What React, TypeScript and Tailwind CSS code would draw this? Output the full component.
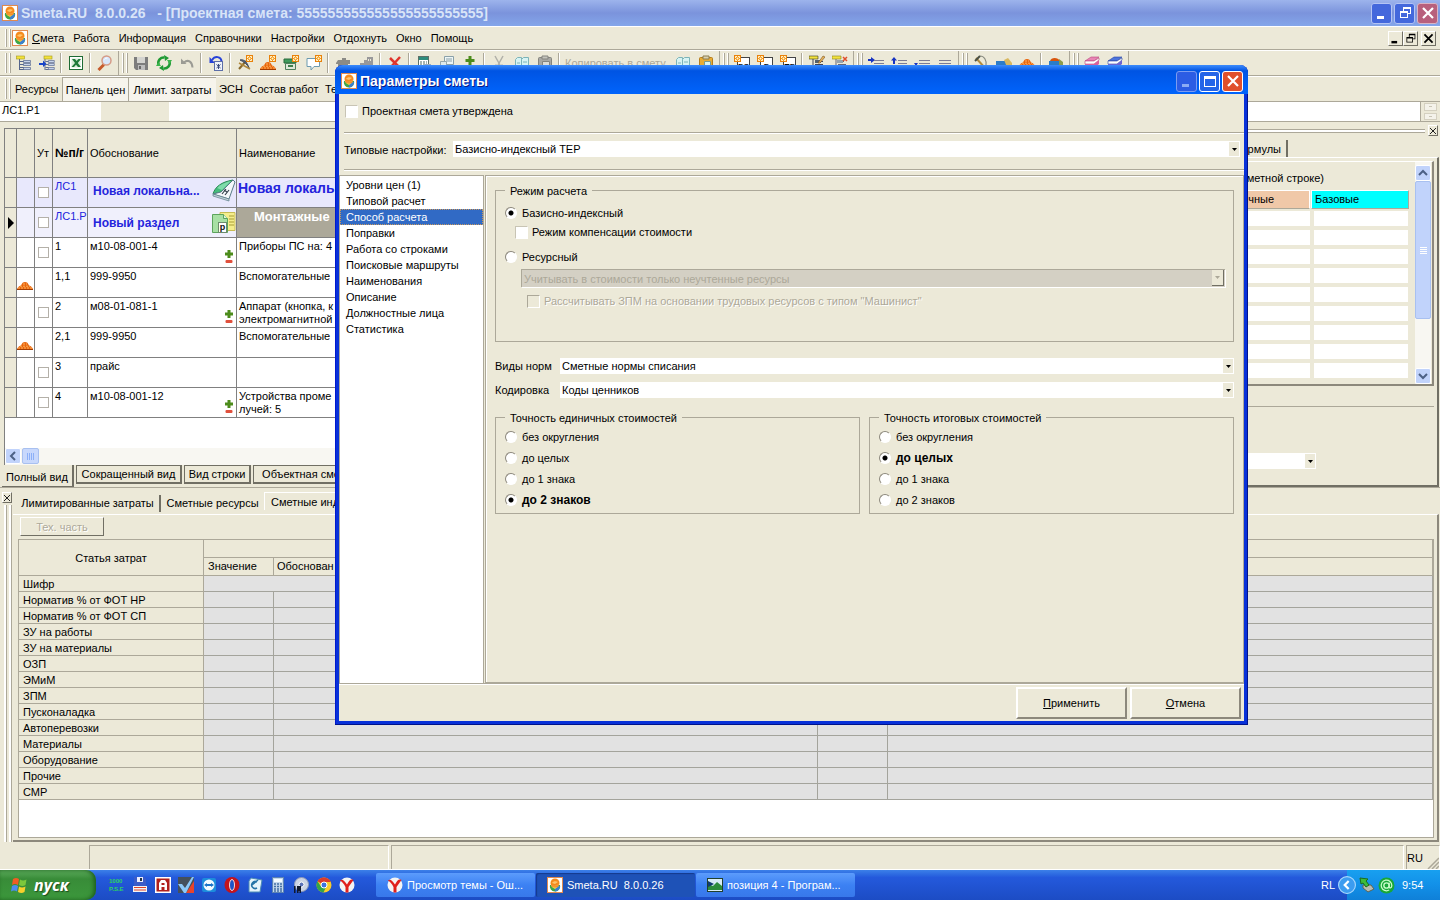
import clsx from "clsx";
import type { ReactNode } from "react";

const menuItems = ["Работа", "Информация", "Справочники", "Настройки", "Отдохнуть", "Окно", "Помощь"];

const sections = [
  "Уровни цен (1)",
  "Типовой расчет",
  "Способ расчета",
  "Поправки",
  "Работа со строками",
  "Поисковые маршруты",
  "Наименования",
  "Описание",
  "Должностные лица",
  "Статистика"
];

const precision = ["без округления", "до целых", "до 1 знака", "до 2 знаков"];

const estimateRows = [
  { num: "1", code: "м10-08-001-4", name: ["Приборы ПС на: 4"], check: true, pm: true },
  { num: "1,1", code: "999-9950", name: ["Вспомогательные"], mound: true },
  { num: "2", code: "м08-01-081-1", name: ["Аппарат (кнопка, к", "электромагнитной"], check: true, pm: true },
  { num: "2,1", code: "999-9950", name: ["Вспомогательные"], mound: true },
  { num: "3", code: "прайс", name: [], check: true },
  { num: "4", code: "м10-08-001-12", name: ["Устройства проме", "лучей: 5"], check: true, pm: true }
];

const costItems = [
  "Шифр",
  "Норматив % от ФОТ НР",
  "Норматив % от ФОТ СП",
  "ЗУ на работы",
  "ЗУ на материалы",
  "ОЗП",
  "ЭМиМ",
  "ЗПМ",
  "Пусконаладка",
  "Автоперевозки",
  "Материалы",
  "Оборудование",
  "Прочие",
  "СМР"
];

/* ---------- icons ---------- */

function Icon({ children, size = 16, label }: { children: ReactNode; size?: number; label?: string }) {
  return (
    <svg aria-hidden={!label} aria-label={label} className="shrink-0" height={size} viewBox="0 0 16 16" width={size}>
      {children}
    </svg>
  );
}

function Logo() {
  return (
    <Icon>
      <rect fill="#fff" height="15" stroke="#e08a50" width="15" x=".5" y=".5" />
      <path d="M3 8h10a5 5 0 0 1-5 6.500A5 5 0 0 1 3 8z" fill="#3fa648" />
      <path d="M8 9h5a5 5 0 0 1-5 5.500z" fill="#3b7fd0" />
      <path d="M4 9.500 12 9l-4 3z" fill="#f7d24a" />
      <circle cx="8" cy="6" fill="#f58a1c" r="4.500" />
      <path d="M5 6c1-2 4-2.500 6-1L8 7z" fill="#ffc46b" />
      <path d="M4 8.500c2 1 5 1 8-1" fill="none" stroke="#f5a04c" />
    </Icon>
  );
}

const treeBody = (
  <>
    <path d="M3.500 4v11" fill="none" stroke="#55658c" />
    <path d="M4 6.500h4M4 9.500h4M4 12.500h4M4 14.500h4" stroke="#55658c" />
    <path d="M7.500 5.500h7v2h-7zM7.500 8.500h7v2h-7zM7.500 12.500h7v2h-7z" fill="#c7d4ec" stroke="#55658c" strokeWidth=".7" />
  </>
);

const star = (
  <>
    <rect fill="#fff3d0" height="6" stroke="#e8820c" width="6" x="9.500" y=".5" />
    <path d="M12.500 1v5M10 3.500h5M10.800 1.800l3.400 3.400M14.200 1.800l-3.400 3.400" stroke="#f59a1c" />
    <circle cx="12.500" cy="3.500" fill="#fff3d0" r="1" />
  </>
);

const mound = (
  <>
    <path d="M0 14c1-2 2-3 4-3.500C5 8 6 7 8 7s3 1 4 3.500c2 .5 3 1.500 4 3.500z" fill="#e8650c" />
    <path d="M1 13h14M3 11.200h10M6 9h4" stroke="#ffb35e" strokeDasharray="2 1" />
    <path d="M0 14.500h16" stroke="#a23c00" />
  </>
);

const icons: Record<string, ReactNode> = {
  tree: (
    <>
      {treeBody}
      <rect fill="#f2e23c" height="3" stroke="#a59a1c" strokeWidth=".6" width="8" x=".5" y="1" />
    </>
  ),
  treeArrow: (
    <>
      <g transform="translate(3 0) scale(.85 1)">{treeBody}</g>
      <rect fill="#f2e23c" height="3" stroke="#a59a1c" strokeWidth=".6" width="8" x="5" y="1" />
      <path d="M0 8h4V5.500L7.500 9 4 12V10H0z" fill="#1744c8" />
    </>
  ),
  excel: (
    <>
      <rect fill="#fff" height="13" stroke="#1e6b34" width="13" x="1.500" y="1.500" />
      <rect fill="#d8ecd8" height="9" width="9" x="3.500" y="3.500" />
      <path d="M4 4h3l1.500 2L10.500 4H13L9.800 8 13 12h-3L8 9.700 6 12H3.500L7 8z" fill="#1f7a3a" />
    </>
  ),
  search: (
    <>
      <path d="M7 9.500 1.500 15" stroke="#c65b2c" strokeWidth="3" />
      <circle cx="9.500" cy="5.500" fill="#d7e6fb" r="4.500" stroke="#d59a86" strokeWidth="1.500" />
      <path d="M7.500 4.500a3 3 0 0 1 3-1.500" fill="none" stroke="#fff" />
    </>
  ),
  save: (
    <>
      <path d="M1 2h14v13H3l-2-2z" fill="#7d7d7d" />
      <path d="M4 2h8v6H4z" fill="#d4d4d0" />
      <path d="M5 10h7v5H5z" fill="#bdbdbd" />
      <path d="M6 11h2v3H6z" fill="#6a6a6a" />
    </>
  ),
  refresh: (
    <>
      <path d="M2.500 9.500a5.500 5.500 0 0 1 6-7" fill="none" stroke="#1f9a34" strokeWidth="2.500" />
      <path d="M13.500 6.500a5.500 5.500 0 0 1-6 7" fill="none" stroke="#1f9a34" strokeWidth="2.500" />
      <path d="M8 0l5 3-4 3zM8 16l-5-3 4-3z" fill="#1f9a34" />
      <path d="M11 5h5l-2.500 4zM5 11H0l2.500-4z" fill="#39b54a" />
    </>
  ),
  undo: (
    <>
      <path d="M5 7.500c4-3.500 8-1 8.500 5" fill="none" stroke="#9b9b94" strokeWidth="2" />
      <path d="M2 9V3.500L7.500 9z" fill="#9b9b94" />
    </>
  ),
  undoBox: (
    <>
      <path d="M4 5c3-4.500 9-3.500 9.500 1" fill="none" stroke="#2742d8" strokeWidth="2" />
      <path d="M1.500 2v6H7z" fill="#2742d8" />
      <rect fill="#eef2fb" height="9" stroke="#5c6ea8" width="8" x="6.500" y="6.500" />
      <path d="M8.500 9.500l4 3.500M12.500 9.500l-4 3.500M10.500 9v5" stroke="#38487c" />
    </>
  ),
  pickStar: (
    <>
      <path d="M2 14 9 6" stroke="#8a6a2c" strokeWidth="2" />
      <path d="M3 5c3-1 7 1 9 8-2-4-5-6-9-8z" fill="#5a6478" stroke="#444c5c" />
      <path d="M2 8l11 6" stroke="#b0883c" strokeWidth="1.500" />
      {star}
    </>
  ),
  moundStar: (
    <>
      {mound}
      {star}
    </>
  ),
  crateStar: (
    <>
      <path d="M1 4h12v4H1z" fill="#3f9a5c" stroke="#2a6b3c" />
      <path d="M2.500 8.500h10v6h-10z" fill="#dfe8da" stroke="#4f7f5c" />
      <path d="M5 11h5" stroke="#3f7f4c" strokeWidth="2" />
      {star}
    </>
  ),
  bubbleStar: (
    <>
      <path d="M1 3.500h12.500v8H8L5 15v-3.500H1z" fill="#fff" stroke="#6d9ab0" />
      {star}
    </>
  ),
  machine: <path d="M1 8l2-3h4V3h4v2h4v4h-2v5H3V9H1z" fill="#8b8b86" />,
  building: <path d="M2 8h4V5h3V2h6v12H2z M10 4h1v2h-1z M12 4h1v2h-1z" fill="#98989a" fillRule="evenodd" />,
  cross: <path d="M3 3l10 10M13 2 3 13" stroke="#e0342c" strokeWidth="2.500" />,
  calc: (
    <>
      <rect fill="#fff" height="14" stroke="#5c7068" width="10" x="2.500" y="1.500" />
      <path d="M3 2h9v3H3z" fill="#2e8c7c" />
      <path d="M4 7h7M4 9h7M4 11h7" stroke="#4a6a64" strokeDasharray="2 1" />
      <path d="M9 9h6v6H9z" fill="#9ab" />
    </>
  ),
  pages: (
    <>
      <path d="M5.500 1.500h9v8h-9z" fill="#eef6f6" stroke="#8aa0a8" />
      <path d="M7 4h6M7 6h6" stroke="#8aa0a8" />
      <path d="M1.500 6.500h6v8h-6z" fill="#dfeaea" stroke="#98a8ac" />
    </>
  ),
  plus: <path d="M6.500 1h3v3h3v3h-3v3h-3V7h-3V4h3z" fill="#4c8c1c" />,
  cut: (
    <>
      <path d="M4 1l5 9M12 1 7 10" stroke="#b0b0a8" strokeWidth="1.500" />
      <circle cx="5" cy="12" fill="none" r="2" stroke="#a0a09a" />
      <circle cx="11" cy="12" fill="none" r="2" stroke="#a0a09a" />
    </>
  ),
  copy: (
    <>
      <path d="M1.500 4.500l2-2h4v10h-6z" fill="#d7f3f3" stroke="#7cb4b8" />
      <path d="M7.500 4.500l2-2h5v11h-7z" fill="#d7f3f3" stroke="#7cb4b8" />
      <path d="M9 7h4M3 8h3" stroke="#7cb4b8" />
    </>
  ),
  paste: (
    <>
      <rect fill="#a8a8a4" height="12" rx="1" stroke="#84847e" width="13" x="1.500" y="2.500" />
      <path d="M5 1h6v3H5z" fill="#c4c4bc" stroke="#84847e" />
      <path d="M5.500 6.500h7v7h-7z" fill="#dcdcd8" stroke="#84847e" />
    </>
  ),
  pasteGold: (
    <>
      <rect fill="#e8ac34" height="12" rx="1" stroke="#b47c1c" width="13" x="1.500" y="2.500" />
      <path d="M5 1h6v3H5z" fill="#d8d0b0" stroke="#8c7c4c" />
      <path d="M6.500 6.500h6v7h-6z" fill="#d7f3f3" stroke="#7c9c8c" />
    </>
  ),
  treeEdit: (
    <>
      <path d="M4 4v9M6 6.500h8M6 9.500h8" stroke="#445" />
      <path d="M6 5h6v3H6z" fill="#55606c" />
      <path d="M0 1h9v3H0z" fill="#f2e23c" stroke="#3c3c1c" strokeWidth=".6" />
      <path d="M9 8l5-7 2 1-5 6z" fill="#e8b45c" stroke="#7c5420" strokeWidth=".6" />
    </>
  ),
  treeDelete: (
    <>
      <path d="M4 4v9M6 6.500h6M6 9.500h8" stroke="#667" />
      <path d="M5 5h6v3H5z" fill="#98a4ac" />
      <path d="M0 1h9v3H0z" fill="#f2e23c" stroke="#8c8420" strokeWidth=".6" />
      <path d="M11 2l4 4M15 2l-4 4" stroke="#e0502c" strokeWidth="1.500" />
    </>
  ),
  lineIn: (
    <>
      <path d="M0 4h3V2l4 3-4 3V6H0z" fill="#1733c0" />
      <path d="M6 5.500h10M6 8.500h10" stroke="#7c7c94" />
    </>
  ),
  lineUp: (
    <>
      <path d="M3 2 0 5.500h2V9h2V5.500h2z" fill="#1733c0" />
      <path d="M7 5.500h9M7 8.500h9" stroke="#7c7c94" />
    </>
  ),
  lineDown: (
    <>
      <path d="M5 5.500h11M5 8.500h11" stroke="#7c7c94" />
      <path d="M0 8h4l-2 3z" fill="#1733c0" />
    </>
  ),
  lines: <path d="M2 5.500h12M2 8.500h12" stroke="#7c7c94" />,
  pick: (
    <>
      <path d="M7 1c4 0 7 4 6 10" fill="none" stroke="#8a8c80" strokeWidth="1.200" />
      <path d="M3 3l9 10" stroke="#b08c40" strokeWidth="2" />
      <path d="M2 6l5-5" stroke="#4a5044" strokeWidth="2" />
    </>
  ),
  cart: (
    <>
      <path d="M0 6h12v7H0z" fill="#2c7cc8" />
      <path d="M8 5l4-2 4 5v4h-5z" fill="#d8b860" />
    </>
  ),
  moundLow: <g transform="translate(0 -3)">{mound}</g>,
  cartMound: (
    <>
      <path d="M1 6h12v7H1z" fill="#2c7cc8" />
      <path d="M2 6c1-4 8-4 10 0z" fill="#d8550c" />
      <path d="M11 4l4 3v3h-4z" fill="#8c9c4c" />
    </>
  ),
  bookPink: (
    <>
      <path d="M1 6l6-4h8l-5 4z" fill="#e884b4" stroke="#b8447c" strokeWidth=".6" />
      <path d="M1 6v3h9l5-4V3l-5 3z" fill="#fff" stroke="#b8447c" strokeWidth=".6" />
      <path d="M1 9h9l5-4v4l-5 4H1z" fill="#d8609c" />
    </>
  ),
  bookBlue: (
    <>
      <path d="M1 6l6-4h8l-5 4z" fill="#4c74dc" stroke="#2844a4" strokeWidth=".6" />
      <path d="M1 6v3h9l5-4V3l-5 3z" fill="#fff" stroke="#2844a4" strokeWidth=".6" />
      <path d="M1 9h9l5-4v4l-5 4H1z" fill="#6c64d0" />
    </>
  )
};

function DocStar({ text }: { text: string }) {
  return (
    <Icon>
      <rect fill="#fff" height="13" stroke="#444" width="12" x="3.500" y="2.500" />
      <rect fill="#fff3d0" height="6" stroke="#e8820c" width="6" x=".5" y=".5" />
      <path d="M3.500 1v5M1 3.500h5M1.800 1.800l3.400 3.400M5.200 1.800 1.800 5.200" stroke="#f59a1c" />
      <circle cx="3.500" cy="3.500" fill="#fff3d0" r="1" />
      <text fill="#111" fontFamily="Liberation Sans" fontSize="8" fontWeight="bold" textAnchor="middle" x="9.500" y="13.500">
        {text}
      </text>
    </Icon>
  );
}

function PlusMinus() {
  return (
    <svg aria-hidden className="shrink-0" height="14" viewBox="0 0 8 14" width="8">
      <path d="M2.500 0h3v2.500H8v3H5.500V8h-3V5.500H0v-3h2.500z" fill="#4c8c1c" />
      <rect fill="#e0503c" height="3" rx="1" width="7" x=".5" y="10" />
    </svg>
  );
}

function BookIcon() {
  return (
    <svg aria-hidden className="shrink-0" height="24" viewBox="0 0 24 24" width="24">
      <path d="M1 15C3 8 9 3 21 1L9 13z" fill="#45bd7c" stroke="#2a8a54" />
      <path d="M5 9C9 5 14 3 19 2l-9 9z" fill="#7fdcaa" />
      <path d="M1 15l8-2L21 1l2 2-6 17z" fill="#f4f8fa" stroke="#5a7c88" />
      <path d="M1 15l16 5v2L1 17z" fill="#c4d4da" stroke="#5a7c88" strokeWidth=".7" />
      <path d="M10 15l4-5M13 16l4-5M15 13l-3-2" stroke="#34424c" strokeWidth="1.200" />
    </svg>
  );
}

function SectionIcon() {
  return (
    <svg aria-hidden className="shrink-0" height="24" viewBox="0 0 24 24" width="24">
      <path d="M8 1.500h15v18H8z" fill="#f5ee8c" stroke="#c8bc54" />
      <path d="M17 5h5M17 8h5M17 11h5M17 14h5" stroke="#a89c34" />
      <path d="M.5 3.500h11l4 4v14H.5z" fill="#a8e0a4" stroke="#5ca45c" />
      <path d="M11.500 3.500v4h4" fill="#dff5dc" stroke="#5ca45c" />
      <rect fill="#fff" height="10" stroke="#6c8c6c" width="8" x="6.500" y="11.500" />
      <text fill="#111" fontFamily="Liberation Sans" fontSize="9" fontWeight="bold" textAnchor="middle" x="10.500" y="19">
        р
      </text>
    </svg>
  );
}

/* ---------- small controls ---------- */

function Tool({ name }: { name: string }) {
  return (
    <button aria-label={name} className="flex w-[23px] shrink-0 items-center justify-center" type="button">
      <Icon>{icons[name]}</Icon>
    </button>
  );
}

function Sep() {
  return (
    <span className="flex w-[6px] shrink-0 justify-center py-[2px]">
      <span className="w-[2px] border-l border-[#aca899] bg-white" />
    </span>
  );
}

function Grip() {
  return (
    <span className="flex w-[10px] shrink-0 gap-[2px] py-[2px] pl-[3px]">
      <span className="w-[2px] border-l border-white bg-[#aca899]" />
      <span className="w-[2px] border-l border-white bg-[#aca899]" />
    </span>
  );
}

function ToolGroup({ children }: { children: ReactNode }) {
  return <div className="flex shrink-0 border-r border-[#aca899] pr-[2px]">{children}</div>;
}

function Arrow({ className }: { className?: string }) {
  return (
    <svg aria-hidden className={className} height="3" viewBox="0 0 5 3" width="5">
      <path d="M0 0h5L2.500 3z" fill="currentColor" />
    </svg>
  );
}

function Combo({ label, value, className, disabled }: { label: string; value: string; className?: string; disabled?: boolean }) {
  return (
    <span className={clsx("relative flex", className)}>
      <select
        aria-label={label}
        className={clsx(
          "w-full appearance-none pl-[2px] leading-[14px] outline-none",
          disabled
            ? "h-[18px] border-t border-l border-[#aca899] bg-[#d4d0c4] text-[#aca899] shadow-[1px_1px_0_#fff]"
            : "h-[16px] bg-white text-black"
        )}
        disabled={disabled}
      >
        <option>{value}</option>
      </select>
      <span
        className={clsx(
          "pointer-events-none absolute top-[1px] right-[1px] bottom-[1px] flex items-center justify-center bg-[#ece9d8]",
          disabled ? "w-[12px] border-r border-b border-[#716f64] text-[#aca899]" : "w-[10px] text-black"
        )}
      >
        <Arrow />
      </span>
    </span>
  );
}

function Check({ label, disabled }: { label: string; disabled?: boolean }) {
  return (
    <label className={clsx("flex h-[14px] items-center gap-[4px]", disabled && "text-[#aca899] [text-shadow:1px_1px_0_#fff]")}>
      <input
        className={clsx(
          "h-[13px] w-[13px] appearance-none border border-r-white border-b-white",
          disabled ? "border-[#aca899] bg-[#ece9d8]" : "border-[#c8c4b4] bg-white"
        )}
        disabled={disabled}
        type="checkbox"
      />
      {label}
    </label>
  );
}

function Radio({ name, label, checked }: { name: string; label: string; checked?: boolean }) {
  return (
    <label className="flex h-[14px] items-center gap-[5px]">
      <input
        className="h-[12px] w-[12px] appearance-none rounded-full border border-[#8c887c] border-r-white border-b-white bg-white checked:bg-[radial-gradient(circle,#000_0_2px,#fff_3px)]"
        defaultChecked={checked}
        name={name}
        type="radio"
      />
      {label}
    </label>
  );
}

function GroupBox({ title, className, children }: { title: string; className?: string; children: ReactNode }) {
  return (
    <fieldset className={clsx("min-w-0 border border-[#aca899] pl-[9px]", className)}>
      <legend className="px-[5px] pt-[2px] leading-[13px]">{title}</legend>
      {children}
    </fieldset>
  );
}

function Precision({ title, name, selected }: { title: string; name: string; selected: number }) {
  return (
    <GroupBox className="flex-1 pt-[5px] pb-[6px]" title={title}>
      <div className="flex flex-col gap-[7px]">
        {precision.map((item, i) => (
          <div className={i === selected ? "text-[12px] font-bold" : ""} key={item}>
            <Radio checked={i === selected} label={item} name={name} />
          </div>
        ))}
      </div>
    </GroupBox>
  );
}

const captionGlyphs: Record<string, ReactNode> = {
  Свернуть: <path d="M3 11h7v3H3z" fill="currentColor" />,
  Развернуть: <path d="M2 3h12v11H2zM3 6v7h10V6z" fill="currentColor" fillRule="evenodd" />,
  Восстановить: (
    <path d="M6 2h8v7h-3v4H3V6h3zM7 4v2h4v2h2V4zM4 8v4h6V8z" fill="currentColor" fillRule="evenodd" />
  ),
  Закрыть: <path d="M3 3l10 10M13 3 3 13" stroke="currentColor" strokeWidth="2.200" />
};

function CaptionButton({ kind, className }: { kind: string; className: string }) {
  return (
    <button
      aria-label={kind}
      className={clsx("flex h-[21px] w-[21px] items-center justify-center rounded-[3px] border", className)}
      type="button"
    >
      <Icon>{captionGlyphs[kind]}</Icon>
    </button>
  );
}

function MdiButton({ kind, className }: { kind: string; className?: string }) {
  return (
    <button
      aria-label={kind}
      className={clsx(
        "flex h-[15px] w-[15px] items-center justify-center border border-white border-r-[#716f64] border-b-[#716f64] text-black",
        className
      )}
      type="button"
    >
      <Icon size={13}>{captionGlyphs[kind]}</Icon>
    </button>
  );
}

function DockClose() {
  return (
    <button
      aria-label="Закрыть панель"
      className="flex h-[11px] w-[10px] shrink-0 items-center justify-center border border-white border-r-[#716f64] border-b-[#716f64]"
      type="button"
    >
      <svg aria-hidden height="6" viewBox="0 0 6 6" width="6">
        <path d="M0 0l6 6M6 0 0 6" stroke="#222" />
      </svg>
    </button>
  );
}

function ScrollButton({ d, label }: { d: string; label: string }) {
  return (
    <button
      aria-label={label}
      className="flex h-[16px] w-[16px] shrink-0 items-center justify-center rounded-[2px] border border-white bg-[#c1d3fb]"
      type="button"
    >
      <svg aria-hidden height="10" viewBox="0 0 10 10" width="10">
        <path d={d} fill="none" stroke="#4d6185" strokeWidth="2" />
      </svg>
    </button>
  );
}

/* ---------- main window ---------- */

function TitleBar() {
  return (
    <header className="flex h-[27px] items-center gap-[3px] border-b border-white bg-linear-to-b from-[#9db4ec] via-[#7b93dc] to-[#84a6ea] pr-[2px] pl-[2px]">
      <Logo />
      <h1 className="flex-1 text-[14px] font-bold whitespace-pre text-[#d8e4f8]">
        Smeta.RU{"  "}8.0.0.26{"   "}- [Проектная смета: 555555555555555555555555]
      </h1>
      <div className="flex gap-[2px]">
        <CaptionButton className="border-[#b4c4f4] bg-[#4468dc] text-white" kind="Свернуть" />
        <CaptionButton className="border-[#b4c4f4] bg-[#4468dc] text-white" kind="Восстановить" />
        <CaptionButton className="border-[#d8b4c4] bg-[#b8607c] text-white" kind="Закрыть" />
      </div>
    </header>
  );
}

function MenuBar() {
  return (
    <nav className="flex h-[23px] items-center border-b border-[#aca899] pr-[4px] pl-[2px]">
      <span className="flex self-stretch">
        <Grip />
      </span>
      <Logo />
      <button className="ml-[4px]" type="button">
        <u>С</u>мета
      </button>
      {menuItems.map((item) => (
        <button className="ml-[9px]" key={item} type="button">
          {item}
        </button>
      ))}
      <div className="ml-auto flex">
        <MdiButton kind="Свернуть" />
        <MdiButton kind="Восстановить" />
        <MdiButton className="ml-[3px]" kind="Закрыть" />
      </div>
    </nav>
  );
}

function Toolbar() {
  return (
    <div className="flex h-[26px] overflow-hidden border-t border-b border-t-white border-b-[#aca899]">
      <div className="flex w-[119px] shrink-0 border-r border-[#aca899] pl-[2px]">
        <Grip />
        <Tool name="tree" />
        <Tool name="treeArrow" />
        <Sep />
        <Tool name="excel" />
        <Sep />
        <Tool name="search" />
      </div>
      <ToolGroup>
        <Grip />
        <Tool name="save" />
        <Tool name="refresh" />
        <Tool name="undo" />
        <Sep />
        <Tool name="undoBox" />
        <Sep />
        <Tool name="pickStar" />
        <Tool name="moundStar" />
        <Tool name="crateStar" />
        <Tool name="bubbleStar" />
        <Sep />
        <Tool name="machine" />
        <Tool name="building" />
        <Sep />
        <Tool name="cross" />
        <Sep />
        <Tool name="calc" />
        <Tool name="pages" />
        <Tool name="plus" />
        <Sep />
        <Tool name="cut" />
        <Tool name="copy" />
        <Tool name="paste" />
        <Sep />
        <button className="w-[109px] pl-[3px] text-left whitespace-nowrap text-[#aca899]" disabled type="button">
          Копировать в смету
        </button>
        <Tool name="copy" />
        <Tool name="pasteGold" />
      </ToolGroup>
      <ToolGroup>
        <Grip />
        {["РС", "Р", "ПР"].map((text) => (
          <button className="flex w-[23px] items-center justify-center" key={text} type="button">
            <DocStar text={text} />
          </button>
        ))}
        <Sep />
        <Tool name="treeEdit" />
        <Tool name="treeDelete" />
      </ToolGroup>
      <ToolGroup>
        <Grip />
        <Tool name="lineIn" />
        <Tool name="lineUp" />
        <Tool name="lineDown" />
        <Tool name="lines" />
      </ToolGroup>
      <ToolGroup>
        <Grip />
        <Tool name="pick" />
        <Tool name="cart" />
        <Tool name="moundLow" />
        <Sep />
        <Tool name="cartMound" />
      </ToolGroup>
      <ToolGroup>
        <Grip />
        <Tool name="bookPink" />
        <Tool name="bookBlue" />
      </ToolGroup>
    </div>
  );
}

function PanelBar() {
  const pressed = "border-t border-l border-[#aca899] bg-[#f6f4ec]";

  return (
    <div className="flex h-[26px] border-t border-b border-t-white border-b-[#aca899] pl-[2px] whitespace-nowrap">
      <Grip />
      <button className="w-[50px] pl-[3px] text-left" type="button">
        Ресурсы
      </button>
      <button className={clsx("w-[66px] shrink-0", pressed)} type="button">
        Панель цен
      </button>
      <button className={clsx("w-[88px] shrink-0", pressed)} type="button">
        Лимит. затраты
      </button>
      <button className="w-[30px] shrink-0" type="button">
        ЭСН
      </button>
      <button className="w-[76px] shrink-0" type="button">
        Состав работ
      </button>
      <button className="ml-[3px]" type="button">
        Те
      </button>
    </div>
  );
}

function CellBar() {
  return (
    <div className="flex h-[20px] border-b border-[#aca899] bg-white">
      <span className="w-[101px] pl-[2px] leading-[16px]">ЛС1.Р1</span>
      <span className="w-[68px] bg-[#ece9d8]" />
      <input aria-label="Значение ячейки" className="min-w-0 flex-1 border-r border-[#aca899] outline-none" type="text" />
      <div className="flex w-[19px] flex-col items-end gap-[2px] bg-[#ece9d8] py-[1px] pr-[3px]">
        {["больше", "меньше"].map((label) => (
          <button
            aria-label={label}
            className="flex h-[8px] w-[13px] items-center justify-center border border-[#d4d0c0] bg-[#f4f2ea] text-[#aca899]"
            key={label}
            type="button"
          >
            <span className="h-px w-[3px] bg-[#c8c4b4]" />
          </button>
        ))}
      </div>
    </div>
  );
}

function RowCheck({ label }: { label: string }) {
  return (
    <input
      aria-label={label}
      className="mx-auto mt-[9px] block h-[11px] w-[11px] appearance-none border border-[#b4b0a8] bg-white"
      type="checkbox"
    />
  );
}

const cell = "border-r border-b border-[#808080] align-top";

function EstimateTable() {
  return (
    <table className="w-full table-fixed border-separate border-spacing-0 border-t border-[#808080] text-left">
      <colgroup>
        <col className="w-[12px]" />
        <col className="w-[18px]" />
        <col className="w-[18px]" />
        <col className="w-[35px]" />
        <col className="w-[149px]" />
        <col />
      </colgroup>
      <thead>
        <tr className="h-[49px] bg-[#ece9d8] whitespace-nowrap [&>th]:border-r [&>th]:border-b [&>th]:border-[#808080] [&>th]:pl-[2px] [&>th]:font-normal">
          <th />
          <th />
          <th>Ут</th>
          <th>
            <b className="text-[12px]">№п/г</b>
          </th>
          <th>Обоснование</th>
          <th>Наименование</th>
        </tr>
      </thead>
      <tbody>
        <tr className="h-[30px] bg-[#e8e8fc] text-[#2424dc]">
          <td className={clsx(cell, "bg-[#ece9d8]")} />
          <td className={cell} />
          <td className={cell}>
            <RowCheck label="ЛС1" />
          </td>
          <td className={clsx(cell, "pt-[1px] pl-[2px] leading-[14px]")}>ЛС1</td>
          <td className={cell}>
            <div className="flex h-[26px] items-center justify-between pl-[5px] text-[12px] font-bold">
              Новая локальна...
              <BookIcon />
            </div>
          </td>
          <td className={clsx(cell, "pt-[1px] pl-[1px] text-[14px] leading-[18px] font-bold whitespace-nowrap")}>Новая локаль</td>
        </tr>
        <tr className="h-[30px] bg-[#f0f0fc] text-[#2424dc]">
          <td className={clsx(cell, "bg-[#ece9d8]")}>
            <svg aria-hidden className="mt-[9px] ml-[3px]" height="12" viewBox="0 0 6 12" width="6">
              <path d="M0 0l6 6-6 6z" />
            </svg>
          </td>
          <td className={cell} />
          <td className={cell}>
            <RowCheck label="ЛС1.Р1" />
          </td>
          <td className={clsx(cell, "pt-[1px] pl-[2px] leading-[14px]")}>ЛС1.Р</td>
          <td className={cell}>
            <div className="flex h-[29px] items-center justify-between pl-[5px] text-[12px] font-bold">
              Новый раздел
              <SectionIcon />
            </div>
          </td>
          <td className={clsx(cell, "bg-[#aca899] pl-[17px] text-[13px] leading-[17px] font-bold text-white")}>Монтажные</td>
        </tr>
        {estimateRows.map((row) => (
          <tr className="h-[30px] bg-white leading-[13px]" key={row.num}>
            <td className={clsx(cell, "bg-[#ece9d8]")} />
            <td className={cell}>
              {row.mound && (
                <span className="flex pt-[7px]">
                  <Icon>{mound}</Icon>
                </span>
              )}
            </td>
            <td className={cell}>{row.check && <RowCheck label={row.num} />}</td>
            <td className={clsx(cell, "pt-[2px] pl-[2px]")}>{row.num}</td>
            <td className={cell}>
              <div className="flex justify-between pt-[2px] pr-[3px] pl-[2px]">
                {row.code}
                <span className="-mb-[2px] pt-[10px]">{row.pm && <PlusMinus />}</span>
              </div>
            </td>
            <td className={clsx(cell, "pt-[2px] pl-[2px] whitespace-nowrap")}>
              {row.name.map((line) => (
                <div key={line}>{line}</div>
              ))}
            </td>
          </tr>
        ))}
      </tbody>
    </table>
  );
}

function EstimatePane() {
  const tab = "h-[19px] border border-[#716f64] border-r-2 border-b-2 text-center leading-[16px] whitespace-nowrap";

  return (
    <section className="flex min-w-0 flex-1 flex-col pt-[3px]">
      <div className="ml-[4px] flex flex-1 flex-col border-l border-[#808080] bg-white">
        <EstimateTable />
        <div className="flex-1" />
        <div className="flex h-[17px] bg-[#f8f7f2]">
          <ScrollButton d="M7 1 3 5l4 4" label="Прокрутить влево" />
          <span className="ml-[1px] flex h-[16px] w-[17px] items-center justify-center gap-px rounded-[2px] border border-[#a8c0f0] bg-[#c8d8fc]">
            {[0, 1, 2, 3].map((i) => (
              <i className="h-[7px] w-px bg-[#8cb0f8]" key={i} />
            ))}
          </span>
        </div>
      </div>
      <div className="flex h-[22px] gap-[2px] pl-[2px]">
        <button className="w-[72px] border-r-2 border-b border-[#716f64] pt-[3px] text-center" type="button">
          Полный вид
        </button>
        <button className={clsx(tab, "w-[106px]")} type="button">
          Сокращенный вид
        </button>
        <button className={clsx(tab, "w-[67px]")} type="button">
          Вид строки
        </button>
        <button className={clsx(tab, "w-[97px] overflow-hidden")} type="button">
          Объектная сме
        </button>
      </div>
    </section>
  );
}

function PricePane() {
  return (
    <aside className="flex w-[400px] flex-col pr-[1px]">
      <div className="flex items-center gap-[3px] pr-[1px]">
        <span className="h-[4px] flex-1 border-y border-[#aca899] bg-white" />
        <DockClose />
      </div>
      <div className="flex h-[21px] items-end justify-end pr-[151px]">
        <button className="h-[17px] border-r-2 border-[#716f64] px-[5px]" type="button">
          Формулы
        </button>
      </div>
      <div className="flex-1 border-t border-r-2 border-b-2 border-white border-r-[#716f64] border-b-[#716f64] pt-[3px] pr-[3px]">
        <div className="flex h-[225px] overflow-hidden border-t border-r-2 border-b-2 border-white border-r-[#8c887c] border-b-[#8c887c] pr-[1px]">
          <div className="flex-1 pt-[8px] pr-[6px]">
            <p className="h-[20px] pr-[85px] text-right">(данные по сметной строке)</p>
            <div className="grid grid-cols-[1fr_98px] gap-x-[1px] leading-[17px]">
              <div className="border border-white border-b-[#aca899] bg-[#f0c8a8] pr-[35px] text-right">Единичные</div>
              <div className="border border-white border-r-[#aca899] border-b-[#aca899] bg-[#00ffff] pl-[3px]">Базовые</div>
            </div>
            <div className="grid grid-cols-[1fr_94px] gap-x-[4px] gap-y-[4px] pt-[2px] pr-[1px]">
              {Array.from({ length: 18 }, (_, i) => (
                <span className="h-[15px] bg-white" key={i} />
              ))}
            </div>
          </div>
          <div className="flex w-[16px] flex-col bg-[#f8f7f2] pt-[3px]">
            <ScrollButton d="M1 7l4-4 4 4" label="Прокрутить вверх" />
            <span className="flex h-[138px] flex-col items-center justify-center gap-px rounded-[2px] border border-[#a8c0f0] bg-[#c1d3fb]">
              {[0, 1, 2, 3].map((i) => (
                <i className="h-px w-[7px] bg-white" key={i} />
              ))}
            </span>
            <span className="flex-1" />
            <ScrollButton d="M1 3l4 4 4-4" label="Прокрутить вниз" />
          </div>
        </div>
        <hr className="mt-[20px] border-t border-[#aca899]" />
        <Combo className="mt-[46px] mr-[118px] ml-[40px]" label="Уровень цен" value="" />
      </div>
    </aside>
  );
}

function IndexPane() {
  return (
    <section className="flex border-t border-[#aca899] pt-[4px]">
      <div className="flex w-[13px] shrink-0 flex-col gap-[2px] pl-[2px]">
        <DockClose />
        <span className="ml-[2px] flex flex-1 gap-[2px]">
          <span className="w-[3px] border-r border-[#aca899] bg-white" />
          <span className="w-[3px] border-r border-[#aca899] bg-white" />
        </span>
      </div>
      <div className="min-w-0 flex-1 pr-[1px]">
        <div className="flex h-[22px] items-start pl-[3px] whitespace-nowrap">
          <button className="mt-[3px] h-[17px] w-[145px] border-r-2 border-[#716f64] text-center leading-[15px]" type="button">
            Лимитированные затраты
          </button>
          <button className="mt-[3px] h-[17px] w-[103px] text-center leading-[15px]" type="button">
            Сметные ресурсы
          </button>
          <button className="h-[18px] border-t border-l border-white pl-[6px]" type="button">
            Сметные инд
          </button>
        </div>
        <div className="border-t border-r-2 border-b-2 border-white border-r-[#8c887c] border-b-[#8c887c] pt-[2px] pr-[3px] pb-[2px] pl-[5px]">
          <button
            className="mb-[3px] ml-[2px] block h-[19px] w-[84px] border border-white border-r-[#716f64] border-b-[#716f64] text-[#aca899] [text-shadow:1px_1px_0_#fff]"
            disabled
            type="button"
          >
            Тех. часть
          </button>
          <div className="border border-[#aca899] bg-white">
            <table className="w-full table-fixed border-separate border-spacing-0 text-left [&_td]:border-r [&_td]:border-b [&_td]:border-[#a4a49c] [&_td]:bg-[#e2e2e2] [&_th]:border-r [&_th]:border-b [&_th]:border-[#aca899] [&_th]:bg-[#ece9d8] [&_th]:font-normal">
              <colgroup>
                <col className="w-[185px]" />
                <col className="w-[70px]" />
                <col />
                <col className="w-[70px]" />
                <col className="w-[545px]" />
              </colgroup>
              <thead>
                <tr className="h-[18px]">
                  <th className="text-center" rowSpan={2}>
                    Статья затрат
                  </th>
                  <th colSpan={4} />
                </tr>
                <tr className="h-[18px] leading-[13px]">
                  <th className="pl-[4px]">Значение</th>
                  <th className="pl-[3px]">Обоснован</th>
                  <th />
                  <th />
                </tr>
              </thead>
              <tbody>
                {costItems.map((item, i) => (
                  <tr className="h-[16px] leading-[14px]" key={item}>
                    <th className="pt-[1px] pl-[4px]">{item}</th>
                    {i === 0 ? (
                      <td colSpan={4} />
                    ) : (
                      <>
                        <td />
                        <td />
                        <td />
                        <td />
                      </>
                    )}
                  </tr>
                ))}
              </tbody>
            </table>
            <div className="h-[37px]" />
          </div>
        </div>
      </div>
    </section>
  );
}

function StatusBar() {
  const box = "border-t border-l border-[#aca899] border-r border-r-white";

  return (
    <div className="mt-[3px] flex h-[25px] gap-[2px] border-b border-white">
      <span className="w-[87px]" />
      <span className={clsx(box, "w-[300px]")} />
      <span className={clsx(box, "flex-1")} />
      <span className={clsx(box, "flex w-[34px] items-center")}>
        RU
        <svg aria-hidden className="ml-auto self-end" height="12" viewBox="0 0 12 12" width="12">
          <path d="M1 12 12 1M5 12l7-7M9 12l3-3" stroke="#aca899" strokeWidth="1.500" />
        </svg>
      </span>
    </div>
  );
}

/* ---------- taskbar ---------- */

const yandex = (
  <>
    <circle cx="8" cy="8" fill="#f4f4f4" r="7.500" />
    <path d="M.8 3.500C3 1.500 5 3 8 7.500c2-4 4-6 6.500-4.500L9.500 10v5.500h-3V10C5 7 3 4.500.8 3.500z" fill="#e0201c" />
  </>
);

const quickLaunch: [string, ReactNode][] = [
  [
    "1000 PSE",
    <g fill="#2cd45c" fontFamily="Liberation Sans" fontSize="6" fontWeight="bold" key="p">
      <text x="0" y="6">
        1000
      </text>
      <text x="0" y="14">
        P.S.E
      </text>
    </g>
  ],
  [
    "Дискета",
    <g key="d">
      <path d="M2 0h10l2 2v7H2z" fill="#3c5cc8" />
      <path d="M5 0h6v5H5z" fill="#eef" />
      <path d="M8 1h2v3H8z" fill="#234" />
      <path d="M1 9h14v6H1z" fill="#f4f4f4" />
      <path d="M2 10.500h12M2 13h12" stroke="#e0442c" />
    </g>
  ],
  [
    "AutoCAD",
    <g key="a">
      <rect fill="#fff" height="16" width="16" />
      <rect fill="#b0201c" height="13" width="13" x="1.500" y="1.500" />
      <path d="M4 13V6l2-3h4l2 3v7H9.500v-3h-3v3zM6.500 8h3V6h-3z" fill="#fff" fillRule="evenodd" />
    </g>
  ],
  [
    "Проверка",
    <g key="c">
      <path d="M0 0h16v16H0z" fill="#44505c" />
      <path d="M8 16h8V4z" fill="#e8442c" />
      <path d="M0 7h4l3 4 7-11h2L8 16H6z" fill="#8cc8f8" />
    </g>
  ],
  [
    "TeamViewer",
    <g key="t">
      <rect fill="#1c8cdc" height="14" rx="2" width="14" x="1" y="1" />
      <circle cx="8" cy="8" fill="#f4faff" r="5.500" />
      <path d="M3 8l3-2v1h4V6l3 2-3 2V9H6v1z" fill="#1c74c8" />
    </g>
  ],
  [
    "Opera",
    <g key="o">
      <ellipse cx="8" cy="8" fill="#c4141c" rx="7.500" ry="8" />
      <ellipse cx="8" cy="8" fill="#1c54c8" rx="2.500" ry="5.500" stroke="#fbd4d4" />
    </g>
  ],
  [
    "Документы",
    <g key="w">
      <path d="M4 1l11 2-2 12H2V4z" fill="#e4f4fc" stroke="#4c8cb4" />
      <path d="M10 5a3.500 3.500 0 1 0 0 6M5 8l6-5" fill="none" stroke="#2474a8" strokeWidth="1.500" />
    </g>
  ],
  [
    "Калькулятор",
    <g key="k">
      <rect fill="#c4d8ec" height="15" stroke="#5c84b4" width="11" x="2.500" y=".5" />
      <path d="M4 2h8v3H4z" fill="#f4fcff" />
      <path d="M4 7h8M4 9.500h8M4 12h8M4 14h8" stroke="#4470a4" strokeDasharray="2 1" strokeWidth="1.500" />
    </g>
  ],
  [
    "Диск",
    <g key="i">
      <circle cx="8.500" cy="7.500" fill="#ccd4e4" r="7" stroke="#8c98b4" />
      <circle cx="8.500" cy="7.500" fill="#5c74b8" r="2.500" stroke="#fff" />
      <path d="M1 9h1.500v7H1zM4 9h4v7H6.500v-2h-1v2H4z" fill="#10182c" />
    </g>
  ],
  [
    "Chrome",
    <g key="g">
      <circle cx="8" cy="8" fill="#f8cc2c" r="7.500" />
      <path d="M8 8 1.500 4.200A7.500 7.500 0 0 1 14.800 5H8z" fill="#dc3c2c" />
      <path d="M8 8 5 9.500 1.500 4.200A7.500 7.500 0 0 0 7.500 15.500L10 10z" fill="#34a448" />
      <circle cx="8" cy="8" fill="#3c74e0" r="3" stroke="#fff" />
    </g>
  ],
  ["Яндекс", <g key="y">{yandex}</g>]
];

function TaskButton({ icon, text, active }: { icon: ReactNode; text: string; active?: boolean }) {
  return (
    <button
      className={clsx(
        "flex h-[24px] w-[159px] items-center gap-[4px] rounded-[2px] pl-[11px] text-left whitespace-pre text-white",
        active ? "bg-[#1e52b7] shadow-[inset_1px_1px_1px_#143a8c]" : "bg-linear-to-b from-[#5c9cfc] via-[#3c81f3] to-[#3878ea]"
      )}
      type="button"
    >
      {icon}
      {text}
    </button>
  );
}

function Taskbar() {
  return (
    <footer className="flex h-[30px] bg-linear-to-b from-[#3c80e8] via-[#2459dc] via-25% to-[#1c4cc4] text-white">
      <button
        className="flex w-[96px] shrink-0 items-center gap-[5px] rounded-r-[10px] bg-linear-to-b from-[#5cac5c] via-[#388c38] via-30% to-[#3c983c] pl-[11px] shadow-[inset_-2px_0_4px_#1c5c1c]"
        type="button"
      >
        <svg aria-hidden height="18" viewBox="0 0 18 18" width="18">
          <path d="M2 3c2-1.500 4-1.500 6 0L7 9C5 7.500 3 7.500 1 9z" fill="#f05c24" />
          <path d="M9 3.500c2 1.200 4 1.200 6.500 0l-1 5.500c-2 1.200-4 1.200-6.500 0z" fill="#7cc83c" />
          <path d="M1 10c2-1.500 4-1.500 6 0l-1 5.500c-2-1.500-4-1.500-6 0z" fill="#4c8cf0" />
          <path d="M8 10.500c2 1.200 4 1.200 6.500 0l-1 5.500c-2 1.200-4 1.200-6.500 0z" fill="#f8d02c" />
        </svg>
        <span className="font-['Open_Sans'] text-[16px] leading-[20px] font-bold italic [text-shadow:1px_1px_1px_#1c4c1c]">пуск</span>
      </button>
      <div className="ml-[9px] flex w-[271px] shrink-0">
        {quickLaunch.map(([name, art]) => (
          <button aria-label={name} className="flex w-[23px] items-center justify-center" key={name} type="button">
            <Icon>{art}</Icon>
          </button>
        ))}
      </div>
      <div className="flex flex-1 items-center gap-[1px]">
        <TaskButton icon={<Icon>{yandex}</Icon>} text="Просмотр темы - Ош..." />
        <TaskButton active icon={<Logo />} text="Smeta.RU  8.0.0.26" />
        <TaskButton
          icon={
            <Icon>
              <rect fill="#d8ecf8" height="13" stroke="#20402c" width="15" x=".5" y="1.500" />
              <path d="M1 13V7l5 2 4-4 5 4v4z" fill="#2c8c3c" />
              <path d="M1 4l6 3-6 3z" fill="#103c70" />
            </Icon>
          }
          text="позиция 4 - Програм..."
        />
      </div>
      <span className="w-[26px] self-center">RL</span>
      <div className="flex w-[93px] items-center gap-[3px] bg-linear-to-b from-[#18a0f0] via-[#1290e8] to-[#0f80d8]">
        <button aria-label="Скрытые значки" className="-ml-[9px] rounded-full" type="button">
          <Icon size={18}>
            <circle cx="8" cy="8" fill="#3c9cf0" r="7.500" stroke="#a8d8fc" />
            <path d="M9.500 4.500 6 8l3.500 3.500" fill="none" stroke="#fff" strokeWidth="2" />
          </Icon>
        </button>
        <Icon>
          <path d="M4 8h8l3 4-6 3-5-4z" fill="#b8bcb0" stroke="#5c6454" />
          <path d="M1 1l8 1-2 2 3 4-3 2-3-4-2 1z" fill="#3cbc3c" stroke="#1c6c1c" />
        </Icon>
        <Icon size={17}>
          <circle cx="8" cy="8" fill="#18a838" r="7.500" />
          <circle cx="8" cy="8" fill="none" r="2.500" stroke="#c8fcc8" strokeWidth="1.300" />
          <path d="M10.500 5.500V9c0 2 2.500 1.500 2.500-1a5 5 0 1 0-2.500 4.300" fill="none" stroke="#c8fcc8" strokeWidth="1.200" />
        </Icon>
        <time className="ml-[4px]">9:54</time>
      </div>
    </footer>
  );
}

/* ---------- dialog ---------- */

function ParametersDialog() {
  const action = "h-[32px] w-[111px] border-2 border-white border-r-[#8c887c] border-b-[#8c887c]";
  const rule = "h-[2px] border-t border-[#aca899] bg-white";

  return (
    <div
      aria-label="Параметры сметы"
      className="absolute top-[65px] right-[192px] left-[335px] rounded-t-[8px] bg-[#0831d9] px-[4px] pb-[4px] shadow-[inset_-1px_-1px_0_#00138c,inset_1px_0_0_#0019cf]"
      role="dialog"
    >
      <div className="-mx-[4px] flex h-[29px] items-center gap-[3px] rounded-t-[8px] bg-linear-to-b from-[#3c8cfc] via-[#0054e3] via-20% to-[#0064fc] pt-[3px] pr-[5px] pl-[6px]">
        <Logo />
        <h2 className="flex-1 text-[14px] font-bold text-white [text-shadow:1px_1px_0_#0a1883]">Параметры сметы</h2>
        <div className="flex gap-[2px]">
          <CaptionButton className="border-[#7c9cf0] bg-[#2c5ce4] text-[#8cacf4]" kind="Свернуть" />
          <CaptionButton className="border-white bg-[#2464e8] text-white" kind="Развернуть" />
          <CaptionButton className="border-white bg-[#e0502c] text-white" kind="Закрыть" />
        </div>
      </div>
      <div className="bg-[#ece9d8]">
        <div className="h-[38px] pt-[10px] pl-[6px]">
          <Check label="Проектная смета утверждена" />
        </div>
        <div className={clsx(rule, "ml-[5px]")} />
        <div className="flex h-[35px] items-start pt-[7px] pr-[4px] pl-[5px]">
          <span className="w-[109px] shrink-0 leading-[18px] whitespace-nowrap">Типовые настройки:</span>
          <Combo className="flex-1" label="Типовые настройки" value="Базисно-индексный ТЕР" />
        </div>
        <div className={clsx(rule, "ml-[5px]")} />
        <div className="mt-[4px] flex h-[508px] gap-[1px]">
          <ul className="w-[145px] shrink-0 border-t border-r border-l border-[#aca899] bg-white pt-[1px]">
            {sections.map((item, i) => (
              <li key={item}>
                <button
                  className={clsx(
                    "block h-[16px] w-full pl-[6px] text-left leading-[16px]",
                    i === 2 && "bg-[#316ac5] text-white outline-1 -outline-offset-1 outline-dotted outline-[#c8985c]"
                  )}
                  type="button"
                >
                  {item}
                </button>
              </li>
            ))}
          </ul>
          <div className="min-w-0 flex-1 border border-[#aca899] px-[9px] pt-[7px] shadow-[inset_1px_1px_0_#fff]">
            <GroupBox className="pt-[8px] pr-[8px] pb-[33px]" title="Режим расчета">
              <Radio checked label="Базисно-индексный" name="mode" />
              <div className="mt-[5px] pl-[10px]">
                <Check label="Режим компенсации стоимости" />
              </div>
              <div className="mt-[11px]">
                <Radio label="Ресурсный" name="mode" />
              </div>
              <Combo className="mt-[5px] ml-[16px]" disabled label="Учет ресурсов" value="Учитывать в стоимости только неучтенные ресурсы" />
              <div className="mt-[7px] pl-[22px]">
                <Check disabled label={'Рассчитывать ЗПМ на основании трудовых ресурсов с типом "Машинист"'} />
              </div>
            </GroupBox>
            <div className="mt-[16px] flex items-center">
              <span className="w-[65px] shrink-0">Виды норм</span>
              <Combo className="flex-1" label="Виды норм" value="Сметные нормы списания" />
            </div>
            <div className="mt-[8px] flex items-center">
              <span className="w-[65px] shrink-0">Кодировка</span>
              <Combo className="flex-1" label="Кодировка" value="Коды ценников" />
            </div>
            <div className="mt-[12px] flex gap-[9px]">
              <Precision name="unit" selected={3} title="Точность единичных стоимостей" />
              <Precision name="total" selected={1} title="Точность итоговых стоимостей" />
            </div>
          </div>
        </div>
        <div className={rule} />
        <div className="flex justify-end gap-[3px] pt-[2px] pr-[3px] pb-[2px]">
          <button className={action} type="button">
            <u>П</u>рименить
          </button>
          <button className={action} type="button">
            <u>О</u>тмена
          </button>
        </div>
      </div>
    </div>
  );
}

export default function App() {
  return (
    <div className="relative flex min-h-screen flex-col overflow-hidden bg-[#ece9d8] font-['Liberation_Sans',sans-serif] text-[11px] leading-[16px] text-black">
      <TitleBar />
      <MenuBar />
      <Toolbar />
      <PanelBar />
      <CellBar />
      <main className="flex flex-1 pt-[3px]">
        <EstimatePane />
        <PricePane />
      </main>
      <IndexPane />
      <StatusBar />
      <Taskbar />
      <ParametersDialog />
    </div>
  );
}
